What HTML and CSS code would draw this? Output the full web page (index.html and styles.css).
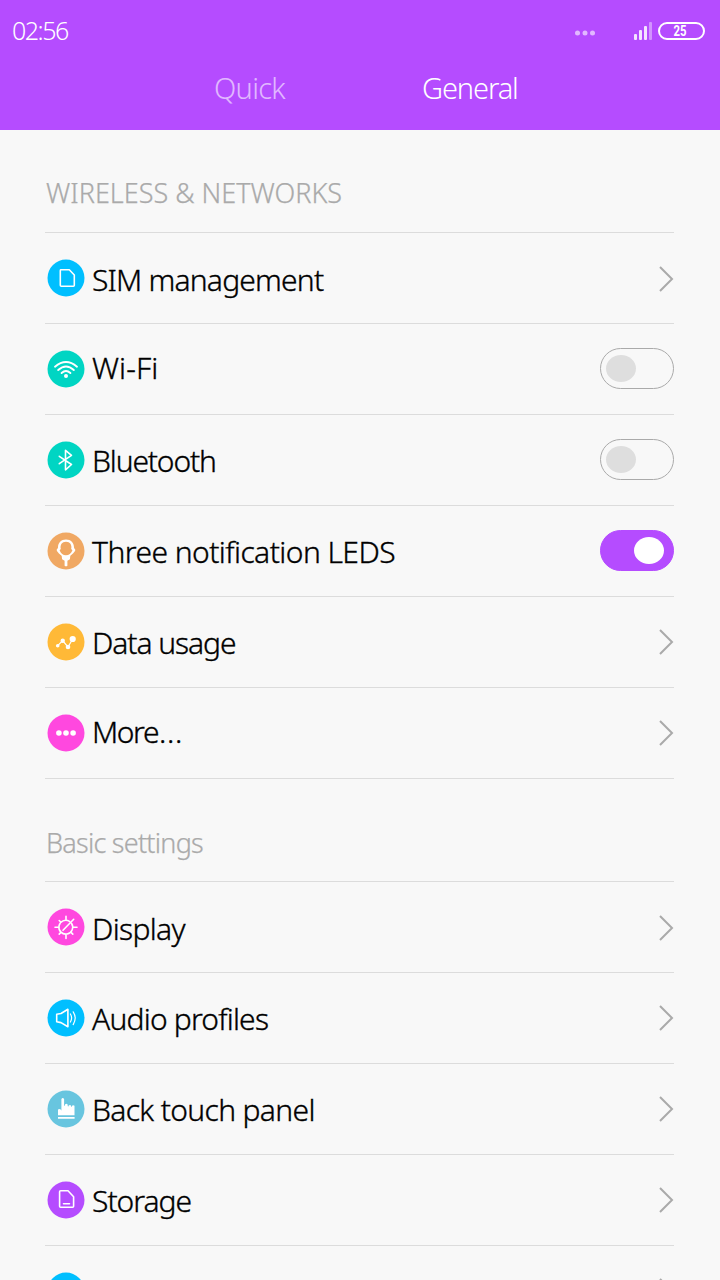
FILE: index.html
```html
<!DOCTYPE html>
<html lang="en">
<head>
<meta charset="utf-8">
<title>Settings</title>
<link rel="stylesheet" href="styles.css">
</head>
<body>
<header class="header">
  <div class="status">
    <span class="clock">02:56</span>
    <svg class="status-icons" width="136" height="24" viewBox="0 0 136 24">
      <g fill="#fff" opacity=".6"><circle cx="7.5" cy="14" r="2.5"/><circle cx="15" cy="14" r="2.5"/><circle cx="22.500" cy="14" r="2.5"/></g>
      <g fill="#fff" opacity=".85"><rect x="64" y="15" width="3" height="6" rx="1"/><rect x="69" y="11" width="3" height="10" rx="1"/><rect x="74" y="7" width="3" height="14" rx="1"/></g>
      <rect x="79" y="3" width="3" height="18" rx="1" fill="#fff" opacity=".4"/>
      <rect x="89" y="4" width="45" height="16" rx="8" fill="none" stroke="#fff" stroke-width="2"/>
      <text class="battery" x="110" y="17" text-anchor="middle" textLength="13" lengthAdjust="spacingAndGlyphs">25</text>
    </svg>
  </div>
  <nav class="tabs"><span class="tab quick">Quick</span><span class="tab general">General</span></nav>
</header>
<main class="list">
  <h2 class="section wireless"><span>WIRELESS &amp; NETWORKS</span></h2>
  <div class="row low">
    <svg class="icon" viewBox="0 0 38 38"><circle cx="19" cy="19" r="18.500" fill="#00bfff"/><path class="line" d="M13.500 10.700h8.800l5 5.300v10.300q0 1-1 1h-12q-1 0-1-1v-14.600q0-1 .2-1z"/></svg>
    <span class="label l-sim">SIM management</span>
    <svg class="chevron" viewBox="0 0 16 28"><path d="M2 2l12 12L2 26"/></svg>
  </div>
  <div class="row high">
    <svg class="icon" viewBox="0 0 38 38"><circle cx="19" cy="19" r="18.500" fill="#00d5c3"/><path class="line wave" d="M8 16.700q11-9.400 22 0M11.200 20q7.800-7 15.600 0M14.600 23q4.400-4 8.800 0"/><circle cx="19" cy="26" r="2" fill="#fff"/></svg>
    <span class="label l-wifi">Wi-Fi</span>
    <span class="toggle"><span class="knob"></span></span>
  </div>
  <div class="row">
    <svg class="icon" viewBox="0 0 38 38"><circle cx="19" cy="19" r="18.500" fill="#00d5c3"/><path class="line" d="M12.300 15.300l12.200 8.200-6 5.300V9.300l6 5-12.200 8.400"/></svg>
    <span class="label l-bt">Bluetooth</span>
    <span class="toggle"><span class="knob"></span></span>
  </div>
  <div class="row">
    <svg class="icon" viewBox="0 0 38 38"><circle cx="19" cy="19" r="18.500" fill="#f0a863"/><path fill="#fff" fill-rule="evenodd" d="M19 7.500c5 0 8 3.500 8 8 0 1 1.300 1.300 1.300 2.600 0 2-3.800 4.400-5 5.900l-.4 3.200-2.500 1.600v4.900q-1.400 1.200-2.800 0v-4.900l-2.500-1.600-.4-3.200c-1.200-1.500-5-3.900-5-5.900 0-1.300 1.300-1.600 1.300-2.600 0-4.500 3-8 8-8zM19 9.800c-4 0-6.200 3.200-5.200 7.200l-1.200 1.200c1.300 3.500 3.400 5 6.400 5s5.100-1.500 6.400-5L24.200 17C25.200 13 23 9.800 19 9.800z"/></svg>
    <span class="label l-led">Three notification LEDS</span>
    <span class="toggle on"><span class="knob"></span></span>
  </div>
  <div class="row">
    <svg class="icon" viewBox="0 0 38 38"><circle cx="19" cy="19" r="18.500" fill="#ffb937"/><path class="line thin" d="M10.700 22.700l5-5 5.300 6.300 4.700-8"/><g fill="#fff"><circle cx="10.700" cy="22.700" r="1.800"/><circle cx="15.700" cy="17.700" r="2.200"/><circle cx="21" cy="24" r="2.300"/><circle cx="25.700" cy="16" r="3.100"/></g></svg>
    <span class="label l-data">Data usage</span>
    <svg class="chevron" viewBox="0 0 16 28"><path d="M2 2l12 12L2 26"/></svg>
  </div>
  <div class="row high">
    <svg class="icon" viewBox="0 0 38 38"><circle cx="19" cy="19" r="18.500" fill="#ff48df"/><g fill="#fff"><circle cx="11.900" cy="19" r="2.800"/><circle cx="19" cy="19" r="2.800"/><circle cx="26.100" cy="19" r="2.800"/></g></svg>
    <span class="label l-more">More<span class="dots">...</span></span>
    <svg class="chevron" viewBox="0 0 16 28"><path d="M2 2l12 12L2 26"/></svg>
  </div>
  <h2 class="section basic"><span>Basic settings</span></h2>
  <div class="row low">
    <svg class="icon" viewBox="0 0 38 38"><circle cx="19" cy="19" r="18.500" fill="#ff48df"/><path class="line" d="M16 22.300L26.700 11.300M24.600 15.500a6.900 6.900 0 1 1-2.100-2.100M19 11.800V8.200M19 26.800v3.600M11.500 19.300H8M26.500 19.300H30M13.700 14l-1.500-1.500M13.700 24.600l-1.500 1.500M24.300 24.600l1.500 1.500"/></svg>
    <span class="label l-display">Display</span>
    <svg class="chevron" viewBox="0 0 16 28"><path d="M2 2l12 12L2 26"/></svg>
  </div>
  <div class="row">
    <svg class="icon" viewBox="0 0 38 38"><circle cx="19" cy="19" r="18.500" fill="#00bfff"/><path class="line" d="M9.700 15.200L14 14.500l6.900-4.200v17.500L14 23.600l-4.300-.9z"/><path class="line thin" d="M23.400 15q2.400 4 0 8M26.200 12.800q4 6.200 0 12.800"/></svg>
    <span class="label l-audio">Audio profiles</span>
    <svg class="chevron" viewBox="0 0 16 28"><path d="M2 2l12 12L2 26"/></svg>
  </div>
  <div class="row">
    <svg class="icon" viewBox="0 0 38 38"><circle cx="19" cy="19" r="18.500" fill="#68c5df"/><path fill="#fff" d="M11 25.200v-5.600q1.500-1.500 3 .2l.4 1V9q1.300-2.200 2.700 0v6.600l.9.200.1-1.600q1.400-1 2.400 0l.3 2 .7.200.2-1q1.300-.8 2.300 0l.2 1.300.7.100.1-1.100q1.400-.8 2.500.1v9.400zM11 26.900h16.600v1.900H11z"/></svg>
    <span class="label l-back">Back touch panel</span>
    <svg class="chevron" viewBox="0 0 16 28"><path d="M2 2l12 12L2 26"/></svg>
  </div>
  <div class="row">
    <svg class="icon" viewBox="0 0 38 38"><circle cx="19" cy="19" r="18.500" fill="#b54cff"/><path class="line" d="M13.700 9.800H21l5.600 5.900v9.500q0 1-1 1h-12q-1 0-1-1V10.800q0-1 1.100-1zM16.500 22.700h6"/></svg>
    <span class="label l-storage">Storage</span>
    <svg class="chevron" viewBox="0 0 16 28"><path d="M2 2l12 12L2 26"/></svg>
  </div>
  <div class="row">
    <svg class="icon" viewBox="0 0 38 38"><circle cx="19" cy="19" r="18.500" fill="#00bfff"/></svg>
    <span class="label"></span>
    <svg class="chevron" viewBox="0 0 16 28"><path d="M2 2l12 12L2 26"/></svg>
  </div>
</main>
</body>
</html>
```
FILE: styles.css
```css
* { box-sizing: border-box; }
html { height: 1280px; overflow: hidden; }
body { margin: 0; width: 720px; height: 1280px; overflow: hidden; background: #f8f8f8; font-family: "Noto Sans", sans-serif; font-weight: 300; }
.header { height: 130px; background: #b54cff; color: #fff; }
.status { height: 60px; padding: 0 14px 0 12px; display: flex; justify-content: space-between; align-items: center; }
.clock { font-size: 25px; line-height: 60px; letter-spacing: -1.5px; }
.status-icons { margin-top: 2px; }
.battery { font: 700 14px Roboto, sans-serif; fill: #fff; }
.tabs { height: 56px; padding-left: 214px; display: flex; font-size: 29px; line-height: 55px; }
.quick { width: 208px; opacity: .6; letter-spacing: -.7px; }
.general { letter-spacing: -1.1px; }
.list { padding: 0 46px 0 45px; }
.section { margin: 0; height: 103px; border-bottom: 1px solid #dcdcdc; color: #aaa; font-size: 27px; font-weight: 300; line-height: 126px; padding-left: 1px; white-space: nowrap; -webkit-text-stroke: .25px #aaa; }
.basic { letter-spacing: -.75px; line-height: 127px; }
.row { height: 91px; border-bottom: 1px solid #dcdcdc; display: flex; align-items: center; padding-left: 2px; }
.icon { width: 38px; height: 38px; flex: none; }
.label { flex: 1; padding-left: 7px; font-size: 30px; line-height: 40px; padding-top: 2px; color: #000; white-space: nowrap; -webkit-text-stroke: .35px #000; }
.low .label { padding-top: 4px; }
.high .label { padding-top: 0; padding-bottom: 2px; }
.l-sim { letter-spacing: -.8px; }
.l-wifi { letter-spacing: .1px; }
.l-bt { letter-spacing: -1.15px; }
.l-led { letter-spacing: -.55px; }
.l-data { letter-spacing: -1.05px; }
.l-more { letter-spacing: -1.4px; }
.dots { letter-spacing: .7px; margin-left: 1px; }
.l-display { letter-spacing: -.65px; }
.l-audio { letter-spacing: -.8px; }
.l-back { letter-spacing: -.65px; }
.l-storage { letter-spacing: -1px; }
.line { fill: none; stroke: #fff; stroke-width: 1.6; stroke-linecap: round; stroke-linejoin: round; }
.wave { stroke-width: 1.9; }
.thin { stroke-width: 1.2; }
.chevron { width: 16px; height: 28px; flex: none; fill: none; stroke: #aaa; stroke-width: 2; }
.low .chevron { margin-top: 2px; }
.toggle { width: 74px; height: 41px; margin-bottom: 2px; border: 1px solid #aaa; border-radius: 21px; display: flex; align-items: center; padding: 0 5px; }
.knob { width: 30px; height: 27px; border-radius: 50%; background: #dedede; }
.on { background: #b54cff; border-color: #b54cff; justify-content: flex-end; padding-right: 9px; }
.on .knob { background: #fff; }
```
